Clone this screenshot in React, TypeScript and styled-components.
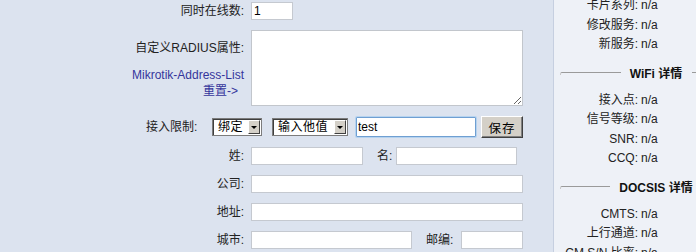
import React from "react";
import styled, { createGlobalStyle } from "styled-components";

const Global = createGlobalStyle`
  html, body { margin: 0; padding: 0; }
  body {
    width: 696px;
    height: 252px;
    overflow: hidden;
    font-family: "Liberation Sans", "Noto Sans CJK SC", sans-serif;
    font-size: 12px;
    color: #222;
    background: #dce3ef;
  }
`;

const Page = styled.div`
  display: flex;
  width: 696px;
  height: 252px;
  overflow: hidden;
`;

const LeftPanel = styled.div`
  flex: 0 0 554px;
  box-sizing: border-box;
  border-right: 1px solid #c6cfe0;
  background: #dce3ef;
`;

const Form = styled.div`
  display: grid;
  grid-template-columns: 244px 1fr;
  column-gap: 7px;
  row-gap: 10px;
  align-items: center;
  padding-top: 2px;
`;

const Label = styled.div`
  text-align: right;
  line-height: 18px;
  white-space: nowrap;
`;

const LabelStack = styled.div`
  align-self: start;
  display: flex;
  flex-direction: column;
  align-items: flex-end;
  padding-top: 10px;
  line-height: 16px;
  white-space: nowrap;
`;

const LinkBlock = styled.div`
  margin-top: 11px;
  display: flex;
  flex-direction: column;
  align-items: flex-end;
`;

const Link = styled.a<{ $pr?: number }>`
  color: #35359c;
  text-decoration: none;
  line-height: 16px;
  padding-right: ${(p) => p.$pr ?? 0}px;
  cursor: pointer;
`;

const TextInput = styled.input<{ $w: number }>`
  box-sizing: border-box;
  width: ${(p) => p.$w}px;
  height: 18px;
  margin: 0;
  padding: 0 2px;
  border: 1px solid #c5c9d0;
  background: #fff;
  font-family: "Liberation Sans", "Noto Sans CJK SC", sans-serif;
  font-size: 12px;
  color: #000;
  outline: none;
`;

const TextArea = styled.textarea`
  box-sizing: border-box;
  width: 272px;
  height: 76px;
  margin: 0;
  padding: 2px;
  border: 1px solid #c2c6cc;
  background: #fff;
  font-family: "Liberation Sans", sans-serif;
  font-size: 12px;
  outline: none;
  display: block;
`;

const AccessRow = styled.div`
  grid-column: 1 / -1;
  display: flex;
  align-items: center;
  height: 22px;
  padding-left: 146px;
  margin-bottom: -1px;
`;

const AccessLabel = styled.div`
  width: 66px;
  line-height: 18px;
  white-space: nowrap;
`;

const SelectBox = styled.div<{ $w: number; $ml?: number }>`
  box-sizing: border-box;
  width: ${(p) => p.$w}px;
  height: 18px;
  margin-left: ${(p) => p.$ml ?? 0}px;
  display: flex;
  align-items: stretch;
  border: 1px solid #7c7c7c;
  box-shadow: inset 1px 1px 0 #3f3f3f;
  background: #fff;
  padding: 1px 1px 1px 2px;
`;

const NativeSelect = styled.select`
  flex: 1;
  min-width: 0;
  appearance: none;
  -webkit-appearance: none;
  border: none;
  outline: none;
  background: transparent;
  margin: 0;
  padding: 0 0 0 3px;
  font-family: "Liberation Sans", "Noto Sans CJK SC", sans-serif;
  font-size: 12px;
  letter-spacing: 0.5px;
  line-height: 14px;
  color: #000;
`;

const ArrowBtn = styled.span`
  flex: 0 0 12px;
  box-sizing: border-box;
  display: flex;
  align-items: center;
  justify-content: center;
  background: #d4d0c8;
  border-top: 1px solid #fff;
  border-left: 1px solid #fff;
  border-right: 1px solid #404040;
  border-bottom: 1px solid #404040;
  &::after {
    content: "";
    width: 0;
    height: 0;
    border-left: 3px solid transparent;
    border-right: 3px solid transparent;
    border-top: 3px solid #000;
  }
`;

const FocusInput = styled.input`
  box-sizing: border-box;
  width: 120px;
  height: 20px;
  margin: 0 0 0 8px;
  padding: 0 1px;
  border: 1px solid #6f9fd2;
  border-radius: 1px;
  box-shadow: 0 0 0 1px #b6d3ef;
  background: #fff;
  font-family: "Liberation Sans", sans-serif;
  font-size: 12px;
  color: #000;
  outline: none;
`;

const Button = styled.button`
  box-sizing: border-box;
  width: 42px;
  height: 22px;
  margin: 0 0 0 5px;
  padding: 0;
  background: #d4d0c8;
  border-top: 1px solid #fff;
  border-left: 1px solid #fff;
  border-right: 1px solid #404040;
  border-bottom: 1px solid #404040;
  box-shadow: inset -1px -1px 0 #808080;
  font-family: "Liberation Sans", "Noto Sans CJK SC", sans-serif;
  font-size: 12.5px;
  color: #000;
  letter-spacing: 1px;
`;

const Group = styled.div`
  display: flex;
  align-items: center;
`;

const SubLabel = styled.div<{ $w: number }>`
  width: ${(p) => p.$w}px;
  margin: 0 3px 0 14px;
  line-height: 18px;
  white-space: nowrap;
`;

const RightPanel = styled.div`
  flex: 0 0 220px;
  background: #eef1f7;
  padding-left: 6px;
`;

const InfoList = styled.div`
  width: 192px;
  margin-top: -4px;
  display: flex;
  flex-direction: column;
`;

const InfoRow = styled.div`
  display: grid;
  grid-template-columns: 78px 1fr;
  column-gap: 3px;
  height: 19.5px;
  line-height: 19.5px;
  white-space: nowrap;
`;

const InfoKey = styled.span`
  text-align: right;
`;

const Legend = styled.div`
  display: flex;
  align-items: center;
  height: 20px;
  margin: 8px 0;
  font-weight: bold;
  color: #111;
  white-space: nowrap;
  &::before,
  &::after {
    content: "";
    flex: 1;
    height: 2px;
    align-self: center;
    margin-top: 1px;
    border-top: 1px solid #9a9a9a;
  }
  &::before {
    border-left: 1px solid #c8c8c8;
    border-top-left-radius: 2px;
    margin-right: 9px;
  }
  &::after {
    margin-left: 10px;
  }
`;

const Info = ({ k, v }: { k: string; v: string }) => (
  <InfoRow>
    <InfoKey>{k}</InfoKey>
    <span>{v}</span>
  </InfoRow>
);

export default function App() {
  return (
    <>
      <Global />
      <Page>
        <LeftPanel>
          <Form>
            <Label>同时在线数:</Label>
            <div>
              <TextInput $w={42} defaultValue="1" />
            </div>

            <LabelStack>
              <span>自定义RADIUS属性:</span>
              <LinkBlock>
                <Link>Mikrotik-Address-List</Link>
                <Link $pr={6}>重置-&gt;</Link>
              </LinkBlock>
            </LabelStack>
            <div>
              <TextArea />
            </div>

            <AccessRow>
              <AccessLabel>接入限制:</AccessLabel>
              <SelectBox $w={50}>
                <NativeSelect defaultValue="bind">
                  <option value="bind">绑定</option>
                </NativeSelect>
                <ArrowBtn />
              </SelectBox>
              <SelectBox $w={76} $ml={10}>
                <NativeSelect defaultValue="other">
                  <option value="other">输入他值</option>
                </NativeSelect>
                <ArrowBtn />
              </SelectBox>
              <FocusInput defaultValue="test" />
              <Button>保存</Button>
            </AccessRow>

            <Label>姓:</Label>
            <Group>
              <TextInput $w={112} />
              <SubLabel $w={16}>名:</SubLabel>
              <TextInput $w={121} />
            </Group>

            <Label>公司:</Label>
            <div>
              <TextInput $w={272} />
            </div>

            <Label>地址:</Label>
            <div>
              <TextInput $w={272} />
            </div>

            <Label>城市:</Label>
            <Group>
              <TextInput $w={161} />
              <SubLabel $w={32}>邮编:</SubLabel>
              <TextInput $w={62} />
            </Group>
          </Form>
        </LeftPanel>

        <RightPanel>
          <InfoList>
            <Info k="卡片系列:" v="n/a" />
            <Info k="修改服务:" v="n/a" />
            <Info k="新服务:" v="n/a" />
            <Legend>WiFi 详情</Legend>
            <Info k="接入点:" v="n/a" />
            <Info k="信号等级:" v="n/a" />
            <Info k="SNR:" v="n/a" />
            <Info k="CCQ:" v="n/a" />
            <Legend>DOCSIS 详情</Legend>
            <Info k="CMTS:" v="n/a" />
            <Info k="上行通道:" v="n/a" />
            <Info k="CM S/N 比率:" v="n/a" />
          </InfoList>
        </RightPanel>
      </Page>
    </>
  );
}
